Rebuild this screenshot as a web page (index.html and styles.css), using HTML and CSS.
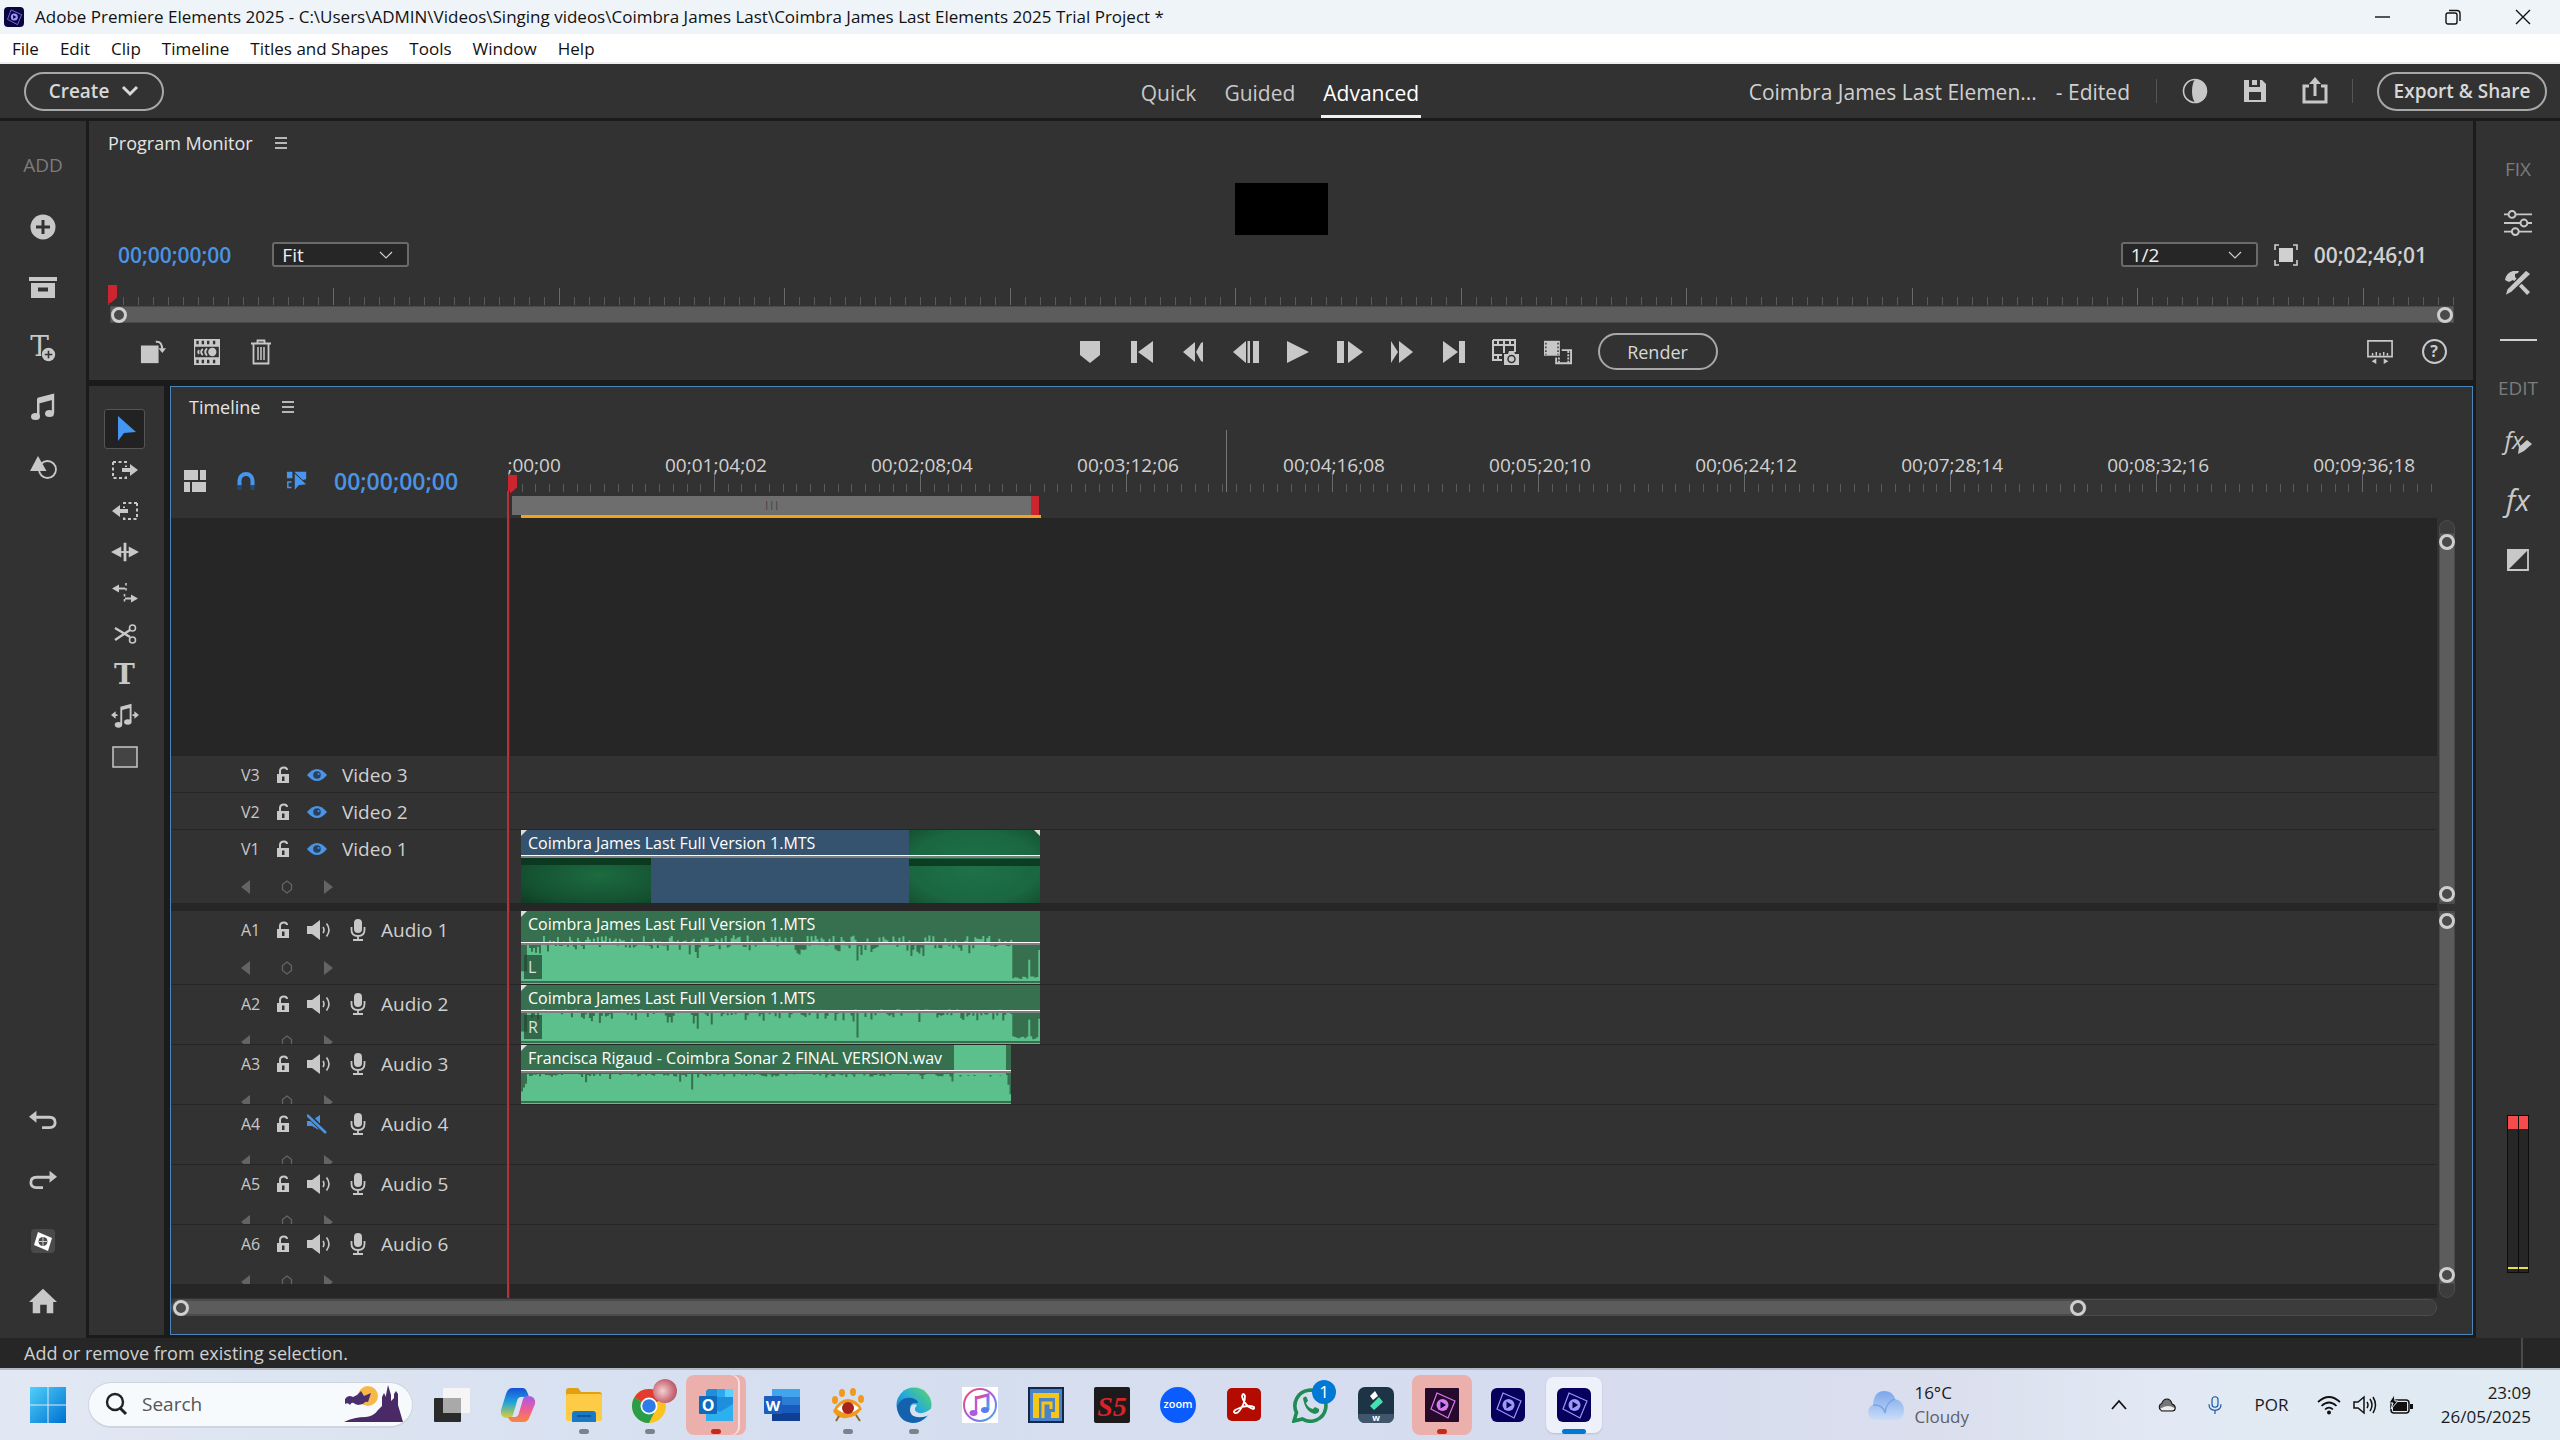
FILE: index.html
```html
<!DOCTYPE html>
<html lang="en">
<head>
    <meta charset="UTF-8">
    <meta name="viewport" content="width=device-width, initial-scale=1.0">
    <title>Adobe Premiere Elements 2025</title>
    <link rel="stylesheet" href="styles.css">
</head>
<body>
    <svg class="sprite" aria-hidden="true">
        <defs>
            <linearGradient id="g-win" x1="0" y1="0" x2="1" y2="1"><stop offset="0" stop-color="#4fd0fb"/><stop offset="1" stop-color="#0070d0"/></linearGradient>
            <linearGradient id="g-edge" x1="0" y1="1" x2="1" y2="0"><stop offset="0" stop-color="#1173c8"/><stop offset="0.5" stop-color="#23a9dd"/><stop offset="1" stop-color="#5fdb5a"/></linearGradient>
            <linearGradient id="g-cop1" x1="0" y1="0" x2="0" y2="1"><stop offset="0" stop-color="#1650d8"/><stop offset="0.5" stop-color="#22a6d8"/><stop offset="1" stop-color="#e0cf30"/></linearGradient>
            <linearGradient id="g-cop2" x1="0" y1="0" x2="0" y2="1"><stop offset="0" stop-color="#a25be8"/><stop offset="0.5" stop-color="#ee5a9a"/><stop offset="1" stop-color="#f8893a"/></linearGradient>
            <linearGradient id="g-music" x1="0" y1="0" x2="1" y2="1"><stop offset="0" stop-color="#fb4a60"/><stop offset="0.5" stop-color="#a75ce0"/><stop offset="1" stop-color="#33b5f2"/></linearGradient>
            <linearGradient id="g-cloud" x1="0" y1="0" x2="0" y2="1"><stop offset="0" stop-color="#7ba6ea"/><stop offset="1" stop-color="#c9ddfa"/></linearGradient>
        </defs>
        <symbol id="i-menu" viewBox="0 0 12 12"><path d="M0 1h12M0 6h12M0 11h12" stroke="currentColor" stroke-width="1.6"/></symbol>
        <symbol id="i-chev" viewBox="0 0 18 12"><path d="M2 2l7 7 7-7" fill="none" stroke="currentColor" stroke-width="3"/></symbol>
        <symbol id="i-thin" viewBox="0 0 14 8"><path d="M1 1l6 6 6-6" fill="none" stroke="currentColor" stroke-width="1.2"/></symbol>
        <symbol id="i-plus" viewBox="0 0 28 28"><circle cx="14" cy="14" r="12.500" fill="currentColor"/><path d="M14 7v14M7 14h14" stroke="#323232" stroke-width="3"/></symbol>
        <symbol id="i-box" viewBox="0 0 28 28"><path d="M0 4h28v4H0zM2 10h24v15H2z" fill="currentColor"/><path d="M9 14.500h10v4H9z" fill="#323232"/></symbol>
        <symbol id="i-music" viewBox="0 0 28 28"><path d="M9 6l15-4v18" fill="none" stroke="currentColor" stroke-width="2.400"/><path d="M8 5.500L25 1v5.500L8 11zM8 8h2.500v16H8z" fill="currentColor"/><ellipse cx="6.500" cy="23.500" rx="4.500" ry="3.500" fill="currentColor"/><ellipse cx="20.500" cy="20.500" rx="4.500" ry="3.500" fill="currentColor"/></symbol>
        <symbol id="i-shapes" viewBox="0 0 28 28"><circle cx="18.500" cy="16.500" r="8.500" fill="none" stroke="currentColor" stroke-width="1.800"/><path d="M9 3l8.500 15H1z" fill="currentColor"/></symbol>
        <symbol id="i-undo" viewBox="0 0 30 24"><path d="M6 8h16q6 0 6 5.500T22 19h-8" fill="none" stroke="currentColor" stroke-width="3"/><path d="M8 1v13L0 7.500z" fill="currentColor"/></symbol>
        <symbol id="i-redo" viewBox="0 0 30 24"><path d="M24 8H8q-6 0-6 5.500T8 19h7" fill="none" stroke="currentColor" stroke-width="3"/><path d="M22 1v13l8-6.500z" fill="currentColor"/></symbol>
        <symbol id="i-org" viewBox="0 0 26 26"><rect x="1" y="1" width="24" height="24" rx="4" fill="#4a4a4a"/><path d="M8 4l14 6-4 13-14-6z" fill="#fff"/><circle cx="13" cy="13.500" r="4.500" fill="#4a4a4a"/><path d="M13 9v9M8.500 13.500h9" stroke="#ccc" stroke-width="1"/></symbol>
        <symbol id="i-home" viewBox="0 0 30 26"><path d="M15 0l15 14h-4v12h-7v-9h-7v9H4V14H0z" fill="currentColor"/></symbol>
        <symbol id="i-contrast" viewBox="0 0 28 28"><circle cx="14" cy="14" r="11.500" fill="none" stroke="currentColor" stroke-width="1.600"/><path d="M14 2.500a11.500 11.500 0 0 1 0 23q-3-4-3-11.500t3-11.500z" fill="currentColor"/></symbol>
        <symbol id="i-save" viewBox="0 0 24 24"><path d="M1 1h5v7h11V1h2l4 4v18H1z" fill="currentColor"/><path d="M9 1h5v5H9z" fill="currentColor"/><path d="M6 13h12v8H6z" fill="#323232"/></symbol>
        <symbol id="i-share" viewBox="0 0 28 28"><path d="M8 9H3v16h22V9h-5" fill="none" stroke="currentColor" stroke-width="3"/><path d="M14 19V5" stroke="currentColor" stroke-width="3"/><path d="M14 0l6 7H8z" fill="currentColor"/></symbol>
        <symbol id="i-fit" viewBox="0 0 24 22"><path d="M5 1H1v5M19 1h4v5M5 21H1v-5M19 21h4v-5" fill="none" stroke="currentColor" stroke-width="1.600"/><path d="M5 4h14v14H5z" fill="currentColor"/></symbol>
        <symbol id="i-rotate" viewBox="0 0 28 28"><path d="M1 7h19v19H1z" fill="currentColor"/><path d="M17 3q7-1 7 9" fill="none" stroke="currentColor" stroke-width="2"/><path d="M20 10h8l-4 5z" fill="currentColor"/></symbol>
        <symbol id="i-film" viewBox="0 0 22 22"><path d="M0 0h22v22H0z" fill="currentColor"/><path d="M1 6.500h20v9H1zM2 1.500h2v3H2zM6.500 1.500h2v3h-2zM11 1.500h2v3h-2zM16 1.500h2v3h-2zM2 17.500h2v3H2zM6.500 17.500h2v3h-2zM11 17.500h2v3h-2zM16 17.500h2v3h-2z" fill="#323232"/><circle cx="15.500" cy="11" r="3.500" fill="currentColor"/><path d="M11 8q-3 3 0 6M7.500 8.500q-3 2.500 0 5M4.500 9.500q-2 1.500 0 3" fill="none" stroke="currentColor" stroke-width="1.600"/></symbol>
        <symbol id="i-trash" viewBox="0 0 20 26"><path d="M0 4.500h20M6.500 4V1.500h7V4M2.500 5v19.500h15V5" fill="none" stroke="currentColor" stroke-width="1.800"/><path d="M7 8v13M10 8v13M13 8v13" stroke="currentColor" stroke-width="1.500"/></symbol>
        <symbol id="i-marker" viewBox="0 0 22 22"><path d="M1 0h20v14l-10 8L1 14z" fill="currentColor"/></symbol>
        <symbol id="i-first" viewBox="0 0 22 22"><path d="M0 0h6v22H0zM22 0v22L7 11z" fill="currentColor"/></symbol>
        <symbol id="i-rew" viewBox="0 0 22 22"><path d="M12 1v20L0 11zM20 1v20l-2-1-5-9 5-9z" fill="currentColor"/></symbol>
        <symbol id="i-back" viewBox="0 0 26 22"><path d="M13 0v22L0 11zM14.500 0h2.500v22h-2.500zM20 0h6v22h-6z" fill="currentColor"/></symbol>
        <symbol id="i-play" viewBox="0 0 22 22"><path d="M0 0l22 11L0 22z" fill="currentColor"/></symbol>
        <symbol id="i-fwdstep" viewBox="0 0 26 22"><path d="M0 0h7v22H0zM11 0l15 11-15 11z" fill="currentColor"/></symbol>
        <symbol id="i-ff" viewBox="0 0 22 22"><path d="M0 0l7 11-7 11zM8 0l14 11L8 22z" fill="currentColor"/></symbol>
        <symbol id="i-last" viewBox="0 0 22 22"><path d="M0 0l15 11L0 22zM16 0h6v22h-6z" fill="currentColor"/></symbol>
        <symbol id="i-grab" viewBox="0 0 28 28"><path d="M1 2h22v12M1 2v20h9M1 7h22M1 17h9M12 7v8M6 2v5M12 2v5M18 2v5M6 17v5" fill="none" stroke="currentColor" stroke-width="2"/><path d="M12 16h4l1-3h5l1 3h4v11H12z" fill="currentColor"/><circle cx="19.500" cy="21" r="3.500" fill="none" stroke="#323232" stroke-width="1.500"/></symbol>
        <symbol id="i-clips" viewBox="0 0 30 26"><path d="M0 1h17v16H0z" fill="currentColor"/><path d="M2 3v13M15 3v13" stroke="#323232" stroke-width="1.500" stroke-dasharray="2 2"/><path d="M19 11h10v14H13v-6" fill="none" stroke="currentColor" stroke-width="2"/><path d="M16 19v6M26 12v13" stroke="currentColor" stroke-width="2" stroke-dasharray="2 1.500"/></symbol>
        <symbol id="i-ruler" viewBox="0 0 28 26"><path d="M1 1h26v17H1z" fill="none" stroke="currentColor" stroke-width="1.800"/><path d="M6 17v-3M10 17v-4M14 17v-3M18 17v-4M22 17v-3" stroke="currentColor" stroke-width="1.600"/><path d="M10 20v6l-5-3zM18 20v6l5-3z" fill="currentColor"/></symbol>
        <symbol id="i-arrow" viewBox="0 0 28 28"><path d="M7 1v25l6-8 12-1z" fill="currentColor"/></symbol>
        <symbol id="i-selfwd" viewBox="0 0 28 28"><path d="M2 6h13v5M2 6v16h13v-4" fill="none" stroke="currentColor" stroke-width="2" stroke-dasharray="3 2.500"/><path d="M11 12h8V8l8 6-8 6v-4h-8z" fill="currentColor"/></symbol>
        <symbol id="i-selback" viewBox="0 0 28 28"><path d="M26 6H13v5M26 6v16H13v-4" fill="none" stroke="currentColor" stroke-width="2" stroke-dasharray="3 2.500"/><path d="M17 12H9V8l-8 6 8 6v-4h8z" fill="currentColor"/></symbol>
        <symbol id="i-stretch" viewBox="0 0 30 28"><path d="M13.500 4h3v20h-3zM11 8v12L0 14zM19 8v12l11-6z" fill="currentColor"/><path d="M8 14h14" stroke="currentColor" stroke-width="2"/></symbol>
        <symbol id="i-slip" viewBox="0 0 28 28"><path d="M6 9.500h8M14 19.500h8" fill="none" stroke="currentColor" stroke-width="2"/><path d="M15 4v9M13.500 15v9" stroke="currentColor" stroke-width="1.600" stroke-dasharray="2.500 2.500"/><path d="M8 5.500v8L1 9.500zM20 15.500v8l7-4z" fill="currentColor"/></symbol>
        <symbol id="i-cut" viewBox="0 0 28 28"><path d="M4 8l15 9M4 20l15-10" stroke="currentColor" stroke-width="2.400"/><circle cx="21.500" cy="8" r="3" fill="none" stroke="currentColor" stroke-width="1.600"/><circle cx="21.500" cy="20" r="3" fill="none" stroke="currentColor" stroke-width="1.600"/></symbol>
        <symbol id="i-remix" viewBox="0 0 30 28"><path d="M10 4l12-3v4L10 8zM10 5h2v18h-2zM20 3h2v17h-2z" fill="currentColor"/><ellipse cx="8" cy="23.500" rx="4" ry="3" fill="currentColor"/><ellipse cx="18" cy="20.500" rx="4" ry="3" fill="currentColor"/><path d="M5 9v8l-5-4zM25 9v8l5-4z" fill="currentColor"/><path d="M3 13h4M23 13h4" stroke="currentColor" stroke-width="2"/></symbol>
        <symbol id="i-rect" viewBox="0 0 28 28"><rect x="2" y="4" width="24" height="20" fill="#444" stroke="currentColor" stroke-width="1.500"/></symbol>
        <symbol id="i-tracks" viewBox="0 0 22 22"><path d="M0 0h14v10H0zM16 0h6v10h-6zM0 12h6v10H0zM8 12h14v10H8z" fill="currentColor"/></symbol>
        <symbol id="i-snap" viewBox="0 0 18 20"><path d="M2.500 15V9.500a6.500 6.500 0 0 1 13 0V15" fill="none" stroke="#4496f0" stroke-width="4"/><path d="M.5 14h4v5h-4zM13.500 14h4v5h-4z" fill="#27496f"/></symbol>
        <symbol id="i-linksel" viewBox="0 0 24 22"><path d="M1 1h6v7H1zM9 1h13v8l-4 1z" fill="#4496f0"/><path d="M6 12H2v6h4" fill="none" stroke="#4496f0" stroke-width="1.600"/><path d="M9 2v20l5-6 9-1z" fill="#4496f0" stroke="#323232" stroke-width="1"/></symbol>
        <symbol id="i-lock" viewBox="0 0 14 18"><path d="M1 8h12v9H1z" fill="currentColor"/><path d="M4 8V5q0-3.500 4-3.500 3 0 3 2.500" fill="none" stroke="currentColor" stroke-width="2"/><path d="M6 10.500h2.500V15H6z" fill="#323232"/></symbol>
        <symbol id="i-eye" viewBox="0 0 20 12"><path d="M0 6q10-12 20 0-10 12-20 0z" fill="#4a94e6"/><circle cx="10" cy="6" r="3.800" fill="#28405c"/><circle cx="11.500" cy="5" r="1" fill="#4a94e6"/></symbol>
        <symbol id="i-spk" viewBox="0 0 24 20"><path d="M0 6h5l8-6v20l-8-6H0z" fill="currentColor"/><path d="M16 7q2 3 0 6M19.500 3.500q5 6.500 0 13" fill="none" stroke="currentColor" stroke-width="1.600"/></symbol>
        <symbol id="i-mute" viewBox="0 0 24 20"><path d="M0 7h4l9-6v15l-3-1-5-3H0z" fill="#4a94e6"/><path d="M0 0l19 19" stroke="#323232" stroke-width="5"/><path d="M0 1l19 18" stroke="#4a94e6" stroke-width="2.600"/></symbol>
        <symbol id="i-mic" viewBox="0 0 16 22"><rect x="4" y="0" width="8" height="14" rx="4" fill="currentColor"/><path d="M1.500 8v3q0 6 6.500 6t6.500-6V8M8 17v4M3 21h10" fill="none" stroke="currentColor" stroke-width="1.800"/></symbol>
        <symbol id="i-kprev" viewBox="0 0 10 14"><path d="M9 0v14L0 7z" fill="#646464"/></symbol>
        <symbol id="i-knext" viewBox="0 0 10 14"><path d="M1 0v14l9-7z" fill="#646464"/></symbol>
        <symbol id="i-kadd" viewBox="0 0 12 14"><path d="M6 1l4.500 3.500v5L6 13 1.500 9.500v-5z" fill="none" stroke="#646464" stroke-width="1.300"/></symbol>
        <symbol id="i-adjust" viewBox="0 0 26 24"><path d="M0 4h26M0 12h26M0 20h26" stroke="currentColor" stroke-width="1.800"/><g fill="#323232" stroke="currentColor" stroke-width="1.800"><circle cx="7.500" cy="4" r="3.200"/><circle cx="18.500" cy="12" r="3.200"/><circle cx="10.500" cy="20" r="3.200"/></g></symbol>
        <symbol id="i-tools" viewBox="0 0 28 26"><path d="M1 10q1-7 8-9h6l-1 2-3 1v3l15 15-3 3L9 10 5 12z" fill="currentColor"/><path d="M22 0l5 4L8 22l-7 4 2-7z" fill="currentColor" stroke="#323232" stroke-width="1.200"/></symbol>
        <symbol id="i-pen" viewBox="0 0 14 14"><path d="M9 0l5 4-8 7-6 3 1-7z" fill="currentColor"/></symbol>
        <symbol id="i-trans" viewBox="0 0 22 22"><path d="M1 1h20v20H1z" fill="none" stroke="currentColor" stroke-width="1.800"/><path d="M0 0h22L0 22z" fill="currentColor"/></symbol>
        <symbol id="i-pre" viewBox="0 0 34 34"><path d="M12 5l18 8-7 17L6 21z" fill="none" stroke="currentColor" stroke-width="1.200"/><circle cx="17.500" cy="17" r="6" fill="currentColor"/><path d="M15.500 13.500v7l5.500-3.500z" fill="#0a0540"/></symbol>
    </svg>

    <header class="titlebar">
        <span class="app-icon"><svg><use href="#i-pre"/></svg></span>
        <span class="title">Adobe Premiere Elements 2025 - C:\Users\ADMIN\Videos\Singing videos\Coimbra James Last\Coimbra James Last Elements 2025 Trial Project *</span>
        <div class="win-buttons">
            <button aria-label="Minimize"><svg viewBox="0 0 16 16"><path d="M0 8h15" stroke="#111" stroke-width="1.400"/></svg></button>
            <button aria-label="Restore"><svg viewBox="0 0 16 16"><rect x="1" y="4" width="11" height="11" rx="2" fill="none" stroke="#111" stroke-width="1.400"/><path d="M4 1.500h8q3 0 3 3V12" fill="none" stroke="#111" stroke-width="1.400"/></svg></button>
            <button aria-label="Close"><svg viewBox="0 0 16 16"><path d="M1 1l14 14M15 1L1 15" stroke="#111" stroke-width="1.400"/></svg></button>
        </div>
    </header>
    <nav class="menubar">
        <a href="#">File</a><a href="#">Edit</a><a href="#">Clip</a><a href="#">Timeline</a><a href="#">Titles and Shapes</a><a href="#">Tools</a><a href="#">Window</a><a href="#">Help</a>
    </nav>

    <div class="topbar">
        <div class="top-left"><button class="pill create">Create <svg><use href="#i-chev"/></svg></button></div>
        <nav class="modes"><a href="#">Quick</a><a href="#">Guided</a><a href="#" class="active">Advanced</a></nav>
        <div class="top-right">
            <span class="project">Coimbra James Last Elemen...</span>
            <span class="edited">- Edited</span>
            <i class="sep"></i>
            <button class="icon" aria-label="Appearance"><svg><use href="#i-contrast"/></svg></button>
            <button class="icon small" aria-label="Save"><svg><use href="#i-save"/></svg></button>
            <button class="icon" aria-label="Share"><svg><use href="#i-share"/></svg></button>
            <i class="sep"></i>
            <button class="pill export">Export &amp; Share</button>
        </div>
    </div>

    <main class="workspace">
        <aside class="sidebar left">
            <span class="side-label">ADD</span>
            <button aria-label="Add media"><svg><use href="#i-plus"/></svg></button>
            <button aria-label="Project assets"><svg><use href="#i-box"/></svg></button>
            <button aria-label="Titles"><span class="t-glyph">T</span><svg class="t-plus"><use href="#i-plus"/></svg></button>
            <button aria-label="Music"><svg><use href="#i-music"/></svg></button>
            <button aria-label="Graphics"><svg><use href="#i-shapes"/></svg></button>
            <div class="spacer"></div>
            <button aria-label="Undo"><svg><use href="#i-undo"/></svg></button>
            <button aria-label="Redo"><svg><use href="#i-redo"/></svg></button>
            <button aria-label="Organizer"><svg><use href="#i-org"/></svg></button>
            <button aria-label="Home"><svg><use href="#i-home"/></svg></button>
        </aside>

        <div class="center">
            <section class="monitor">
                <h2>Program Monitor <svg><use href="#i-menu"/></svg></h2>
                <div class="preview"></div>
                <div class="monitor-info">
                    <span class="timecode blue">00;00;00;00</span>
                    <label class="select fit"><select aria-label="Zoom level"><option>Fit</option></select><svg><use href="#i-thin"/></svg></label>
                    <div class="spacer"></div>
                    <label class="select"><select aria-label="Playback resolution"><option>1/2</option></select><svg><use href="#i-thin"/></svg></label>
                    <svg class="fit-icon"><use href="#i-fit"/></svg>
                    <span class="timecode total">00;02;46;01</span>
                </div>
                <div class="ticks monitor-ticks" data-count="157" data-major="15"><i class="playhead-flag"></i></div>
                <div class="scrub"><i class="knob"></i><i class="knob"></i></div>
                <div class="transport">
                    <div class="transport-side">
                        <button aria-label="Rotate"><svg><use href="#i-rotate"/></svg></button>
                        <button aria-label="Smart trim"><svg class="w22"><use href="#i-film"/></svg></button>
                        <button aria-label="Delete"><svg class="w20"><use href="#i-trash"/></svg></button>
                    </div>
                    <div class="transport-main">
                        <button aria-label="Add marker"><svg class="w22"><use href="#i-marker"/></svg></button>
                        <button aria-label="Go to previous"><svg class="w22"><use href="#i-first"/></svg></button>
                        <button aria-label="Rewind"><svg class="w22"><use href="#i-rew"/></svg></button>
                        <button aria-label="Step back"><svg class="w26"><use href="#i-back"/></svg></button>
                        <button aria-label="Play"><svg class="w22"><use href="#i-play"/></svg></button>
                        <button aria-label="Step forward"><svg class="w26"><use href="#i-fwdstep"/></svg></button>
                        <button aria-label="Fast forward"><svg class="w22"><use href="#i-ff"/></svg></button>
                        <button aria-label="Go to next"><svg class="w22"><use href="#i-last"/></svg></button>
                        <button aria-label="Freeze frame"><svg><use href="#i-grab"/></svg></button>
                        <button aria-label="Split clip"><svg><use href="#i-clips"/></svg></button>
                        <button class="pill render">Render</button>
                    </div>
                    <div class="transport-side end">
                        <button aria-label="Show ruler"><svg><use href="#i-ruler"/></svg></button>
                        <button aria-label="Help"><span class="help">?</span></button>
                    </div>
                </div>
            </section>

            <div class="lower">
                <div class="tools">
                    <button class="active" aria-label="Selection"><svg><use href="#i-arrow"/></svg></button>
                    <button aria-label="Track select forward"><svg><use href="#i-selfwd"/></svg></button>
                    <button aria-label="Track select backward"><svg><use href="#i-selback"/></svg></button>
                    <button aria-label="Time stretch"><svg><use href="#i-stretch"/></svg></button>
                    <button aria-label="Slip"><svg><use href="#i-slip"/></svg></button>
                    <button aria-label="Split"><svg><use href="#i-cut"/></svg></button>
                    <button aria-label="Text"><span class="t-glyph">T</span></button>
                    <button aria-label="Music remix"><svg><use href="#i-remix"/></svg></button>
                    <button aria-label="Rectangle"><svg><use href="#i-rect"/></svg></button>
                </div>

                <section class="timeline">
                    <h2>Timeline <svg><use href="#i-menu"/></svg></h2>
                    <div class="ruler-row">
                        <div class="ruler-tools">
                            <button aria-label="Track layout"><svg class="w22"><use href="#i-tracks"/></svg></button>
                            <button aria-label="Snap"><svg class="w18"><use href="#i-snap"/></svg></button>
                            <button aria-label="Linked selection"><svg class="w22"><use href="#i-linksel"/></svg></button>
                            <span class="timecode big blue">00;00;00;00</span>
                        </div>
                        <div class="ruler">
                            <div class="ruler-labels">
                                <span>00;00;00;00</span><span>00;01;04;02</span><span>00;02;08;04</span><span>00;03;12;06</span><span>00;04;16;08</span><span>00;05;20;10</span><span>00;06;24;12</span><span>00;07;28;14</span><span>00;08;32;16</span><span>00;09;36;18</span>
                            </div>
                            <div class="ticks" data-count="141" data-major="15"></div>
                            <div class="workarea"><span>|||</span></div>
                            <i class="render-line"></i>
                            <i class="cursor-line"></i>
                            <i class="playhead-flag"></i>
                        </div>
                    </div>
                    <div class="tracks-row">
                        <div class="tracks">
                            <div class="track-space"></div>
                            <div class="video-tracks" id="video"></div>
                            <div class="audio-tracks" id="audio"></div>
                            <i class="playhead-line"></i>
                        </div>
                        <div class="vscrolls">
                            <div class="vscroll top"><div class="thumb"><i class="knob"></i><i class="knob"></i></div></div>
                            <div class="vscroll bottom"><div class="thumb"><i class="knob"></i><i class="knob"></i></div></div>
                        </div>
                    </div>
                    <div class="hscroll"><div class="thumb"><i class="knob"></i><i class="knob"></i></div></div>
                </section>
            </div>
        </div>

        <aside class="sidebar right">
            <span class="side-label">FIX</span>
            <button aria-label="Adjust"><svg><use href="#i-adjust"/></svg></button>
            <button aria-label="Tools"><svg><use href="#i-tools"/></svg></button>
            <hr>
            <span class="side-label edit">EDIT</span>
            <button aria-label="Applied effects"><span class="fx small">fx</span><svg class="pen"><use href="#i-pen"/></svg></button>
            <button aria-label="Effects"><span class="fx">fx</span></button>
            <button aria-label="Transitions"><svg class="w22"><use href="#i-trans"/></svg></button>
            <div class="spacer"></div>
            <div class="meter"><i></i><i></i></div>
        </aside>
    </main>

    <div class="statusbar"><span>Add or remove from existing selection.</span><i></i></div>

    <footer class="taskbar">
        <button class="task" aria-label="Start"><svg viewBox="0 0 35 35"><path d="M0 0h17v17H0zM18 0h17v17H18zM0 18h17v17H0zM18 18h17v17H18z" fill="url(#g-win)"/></svg></button>
        <label class="search">
            <svg class="search-icon" viewBox="0 0 24 24"><circle cx="11" cy="10" r="8" fill="none" stroke="#222" stroke-width="2.400"/><path d="M16 16l6 6" stroke="#222" stroke-width="3"/></svg>
            <input type="text" placeholder="Search" aria-label="Search">
            <svg class="castle" viewBox="0 0 60 38"><circle cx="24" cy="11" r="10" fill="#f7b84a"/><path d="M1 14q3-5 8-2l4-2 4-4 3 5 7-3-3 9q-3-1-5 2l-5 1-3-1q-3-3-5 1-2-3-5-1z" fill="#4a2f6e"/><path d="M0 37q10-5 22-5 8-1 12-7l4-4V12l2-4 2 4v-2l2-10 3 10v6l3-3V9l2-3 2 3v11l5 17z" fill="#4a2a66"/></svg>
        </label>
        <button class="task" aria-label="Task view"><svg viewBox="0 0 36 36"><rect x="0" y="11" width="27" height="24" rx="1" fill="#2b2b2b"/><rect x="9" y="1" width="27" height="25" rx="1" fill="#f5f5f5"/><path d="M9 11h18v15H9z" fill="#a9a9a9"/></svg></button>
        <button class="task" aria-label="Copilot"><svg viewBox="0 0 36 36"><path d="M12 1h11q3 0 5 6l1 3h-8q-3 0-4 4l-4 14q-1 3-5 3Q0 31 1 23L6 7q2-6 6-6z" fill="url(#g-cop1)"/><path d="M24 35H13q-3 0-5-5h7q3 0 4-4l4-14q1-3 5-3 8 0 7 8l-5 12q-2 6-6 6z" fill="url(#g-cop2)"/></svg></button>
        <button class="task run" aria-label="File Explorer"><svg viewBox="0 0 36 36"><path d="M0 4q0-3 3-3h9l3 4h18q3 0 3 3v8H0z" fill="#e2a00f"/><rect x="0" y="7" width="36" height="27" rx="2" fill="#fdcb45"/><path d="M6 35V27q0-3 3-3h18q3 0 3 3v8z" fill="#1a78c8"/><path d="M11 29h14" stroke="#0c4c8a" stroke-width="1.500"/></svg></button>
        <button class="task run" aria-label="Chrome"><svg viewBox="0 0 36 36"><circle cx="17" cy="19" r="17" fill="#fcc31e"/><path d="M17 19L2.300 10.500A17 17 0 0 1 32 11z" fill="#e33b2e"/><path d="M17 19L2.300 10.500A17 17 0 0 0 17 36l6-12z" fill="#2a9d49"/><circle cx="17" cy="19" r="8.500" fill="#fff"/><circle cx="17" cy="19" r="6.800" fill="#2f7be8"/></svg><i class="avatar"></i></button>
        <button class="task run alert stacked" aria-label="Outlook"><svg viewBox="0 0 36 36"><path d="M10 2h25v32H8V4z" fill="#1e8fdc"/><path d="M19 2h8v8h-8z" fill="#2aa9ee"/><path d="M27 2h8v8h-8z" fill="#55d0ff"/><path d="M8 17l14 8 13-8v17H8z" fill="#2fb0ee"/><rect x="1" y="9" width="18" height="18" rx="1" fill="#0f69bd"/><text x="10" y="24" text-anchor="middle" font-size="16" font-weight="700" fill="#fff">O</text></svg></button>
        <button class="task" aria-label="Word"><svg viewBox="0 0 36 36"><path d="M8 2h28v8H8z" fill="#41a5ee"/><path d="M8 10h28v8H8z" fill="#2b7cd3"/><path d="M8 18h28v8H8z" fill="#185abd"/><path d="M8 26h28v8H8z" fill="#103f91"/><rect x="0" y="9" width="18" height="18" rx="1" fill="#1a5dbe"/><text x="9" y="24" text-anchor="middle" font-size="15" font-weight="700" fill="#fff">W</text></svg></button>
        <button class="task run" aria-label="XnView"><svg viewBox="0 0 36 36"><g fill="#f09a1c"><ellipse cx="5" cy="13" rx="3" ry="4"/><ellipse cx="12" cy="6" rx="3" ry="4"/><ellipse cx="23" cy="5" rx="3" ry="4"/><ellipse cx="31" cy="12" rx="3" ry="4"/><path d="M3 24q6-12 15-12t14 10l-6 6q-7 4-13 3-7-1-10-7z"/></g><path d="M7 22q10-12 22-1-11 10-22 1z" fill="#fff"/><circle cx="18" cy="21" r="6" fill="#a8231c"/><path d="M9 29l-3 5M26 28l4 6" stroke="#8a6a30" stroke-width="2"/></svg></button>
        <button class="task run" aria-label="Edge"><svg viewBox="0 0 36 36"><circle cx="18" cy="18" r="17.500" fill="url(#g-edge)"/><path d="M1 19q5-10 15-8 6 2 6 5-9-2-8 7 3 9 17 6-6 7-14 7Q2 35 1 19z" fill="#1461ad"/><path d="M21 18q-5 6 2 8 6 1 13-5-1 6-5 8-15 4-17-5 0-9 7-6z" fill="#d8e0f0"/></svg></button>
        <button class="task" aria-label="iTunes"><svg viewBox="0 0 36 36"><path d="M0 0h36v36H0z" fill="#fff"/><circle cx="18" cy="18" r="16" fill="none" stroke="url(#g-music)" stroke-width="2"/><path d="M14 11l12-3v15" fill="none" stroke="url(#g-music)" stroke-width="3"/><path d="M14 9v17" stroke="#c458c8" stroke-width="2.400"/><ellipse cx="11.500" cy="26" rx="4" ry="3" fill="#b05ae0"/><ellipse cx="23" cy="23" rx="4" ry="3" fill="#5a7cf0"/></svg></button>
        <button class="task" aria-label="Player"><svg viewBox="0 0 36 36"><path d="M1 1h34v34H1z" fill="#4b83c8" stroke="#14264a" stroke-width="2"/><path d="M5 31V6h26v25h-8v-6h4V11H11v20z" fill="#f5c518"/><path d="M15 31V16h8v6" fill="none" stroke="#f5c518" stroke-width="3"/></svg></button>
        <button class="task" aria-label="S5"><svg viewBox="0 0 36 36"><rect width="36" height="36" rx="2" fill="#1c1a1a"/><text x="18" y="29" text-anchor="middle" font-size="28" font-style="italic" font-weight="700" font-family="Liberation Serif, serif" fill="#d8232a">S5</text></svg></button>
        <button class="task" aria-label="Zoom"><svg viewBox="0 0 36 36"><circle cx="18" cy="18" r="18" fill="#0b5cff"/><text x="18" y="21" text-anchor="middle" font-size="11" font-weight="600" fill="#fff">zoom</text></svg></button>
        <button class="task" aria-label="Acrobat"><svg viewBox="0 0 36 36"><rect x="1" y="1" width="34" height="33" rx="5" fill="#b30b00"/><path d="M9 26q-4-2 7-6 8-2 12 0 1 4-5 0-6-5-7-11 1-4 3 0 0 7-5 14-3 4-5 3z" fill="none" stroke="#fff" stroke-width="1.800"/></svg></button>
        <button class="task" aria-label="WhatsApp"><svg viewBox="0 0 36 36"><path d="M2 34l2.500-8.500A15.500 15.500 0 1 1 10.500 32z" fill="none" stroke="#1f8b55" stroke-width="3.600"/><path d="M11 11q3-3 4 0l1 3-2 2q2 5 7 6l2-2 4 2q1 4-4 5Q13 25 11 11z" fill="#1f8b55"/></svg><b class="badge">1</b></button>
        <button class="task" aria-label="Filmora"><svg viewBox="0 0 36 36"><rect width="36" height="36" rx="7" fill="#1d3346"/><path d="M0 27h36q0 9-7 9H7q-7 0-7-9z" fill="#40566a"/><path d="M12 9l5-5 3 5-5 4z" fill="#fff"/><path d="M12 19l9-9 4 5-9 8z" fill="#45e0b0"/><text x="18" y="34" text-anchor="middle" font-size="9" font-weight="700" fill="#fff">w</text></svg></button>
        <button class="task run alert" aria-label="Premiere Elements Editor"><svg class="pre pink"><use href="#i-pre"/></svg></button>
        <button class="task" aria-label="Elements Organizer"><svg class="pre"><use href="#i-pre"/></svg></button>
        <button class="task current" aria-label="Premiere Elements"><svg class="pre"><use href="#i-pre"/></svg></button>

        <div class="weather">
            <svg viewBox="0 0 38 38"><path d="M8 34a8 8 0 0 1-1-15Q8 5 18 5q9 0 11 8 9 2 9 12 0 9-9 9z" fill="url(#g-cloud)"/><path d="M7 19q10-1 12 8 1-11 10-14" fill="none" stroke="#7ba4e8" stroke-width="1.500"/></svg>
            <div><span>16°C</span><span class="muted">Cloudy</span></div>
        </div>
        <div class="tray">
            <button class="tray-slot" aria-label="Hidden icons"><svg viewBox="0 0 18 18"><path d="M2 13l7-8 7 8" fill="none" stroke="#111" stroke-width="1.800"/></svg></button>
            <button class="tray-slot" aria-label="OneDrive"><svg class="w24" viewBox="0 0 24 20"><path d="M4 17a5 5 0 0 1 1-9q2-6 7-6t7 7q4 1 4 5t-4 4H5z" fill="#777" stroke="#111" stroke-width="1.400"/><path d="M3 15q9-7 19-1 0 3-3 3H5z" fill="#eee"/></svg></button>
            <button class="tray-slot" aria-label="Microphone"><svg class="w24" viewBox="0 0 24 24"><rect x="8" y="1" width="8" height="14" rx="4" fill="none" stroke="#1557a8" stroke-width="1.600"/><path d="M4 11q0 8 8 8t8-8M12 19v5" fill="none" stroke="#1557a8" stroke-width="1.600"/></svg></button>
            <span class="lang">POR</span>
            <button class="tray-icon" aria-label="Wi-Fi"><svg class="w24" viewBox="0 0 24 20"><path d="M1 7q11-10 22 0M4.500 11q7.500-7 15 0M8 14.500q4-4 8 0" fill="none" stroke="#111" stroke-width="1.700"/><circle cx="12" cy="17.500" r="2" fill="#111"/></svg></button>
            <button class="tray-icon" aria-label="Volume"><svg class="w24" viewBox="0 0 24 20"><path d="M1 7h4l6-5v16l-6-5H1z" fill="none" stroke="#111" stroke-width="1.500"/><path d="M14 7q2 3 0 6M17 4q4 6 0 12M20 2q5 8 0 16" fill="none" stroke="#111" stroke-width="1.500"/></svg></button>
            <button class="tray-icon" aria-label="Battery"><svg class="w24" viewBox="0 0 24 20"><rect x="2" y="5" width="18" height="13" rx="3" fill="none" stroke="#111" stroke-width="1.500"/><path d="M4 7h14v9H4zM21 9h3v5h-3z" fill="#111"/><path d="M5 0L0 8h4l-2 6 7-8H6z" fill="#111" stroke="#e2e8f3" stroke-width="1"/></svg></button>
            <div class="clock"><span>23:09</span><span>26/05/2025</span></div>
        </div>
    </footer>

    <script>
        const tracks = [
            { id: 'V3', name: 'Video 3', type: 'video', size: 'slim' },
            { id: 'V2', name: 'Video 2', type: 'video', size: 'slim' },
            { id: 'V1', name: 'Video 1', type: 'video', size: 'tall', clip: { title: 'Coimbra James Last Full Version 1.MTS', kind: 'film' } },
            { id: 'A1', name: 'Audio 1', type: 'audio', size: 'tall', clip: { title: 'Coimbra James Last Full Version 1.MTS', kind: 'wave', ch: 'L', h: 74, line: 32, seed: 7 } },
            { id: 'A2', name: 'Audio 2', type: 'audio', size: 'mid', clip: { title: 'Coimbra James Last Full Version 1.MTS', kind: 'wave', ch: 'R', h: 60, line: 27, seed: 11 } },
            { id: 'A3', name: 'Audio 3', type: 'audio', size: 'mid', clip: { title: 'Francisca Rigaud - Coimbra Sonar 2 FINAL VERSION.wav', kind: 'wave flat', h: 60, line: 26, seed: 5 } },
            { id: 'A4', name: 'Audio 4', type: 'audio', size: 'mid', muted: true },
            { id: 'A5', name: 'Audio 5', type: 'audio', size: 'mid' },
            { id: 'A6', name: 'Audio 6', type: 'audio', size: 'mid' }
        ];

        function icon(name, cls) {
            return `<svg class="${cls}"><use href="#i-${name}"/></svg>`;
        }

        // small repeatable random generator so that the waveform is stable
        function random(seed) {
            return () => (seed = (seed * 16807) % 2147483647) / 2147483647;
        }

        function wavePath(clip) {
            const rnd = random(clip.seed * 7919);
            const flat = clip.kind.includes('flat');
            const end = flat ? 483 : 492;
            const width = flat ? 490 : 520;
            let d = `M0 ${clip.h - 2}`;
            for (let x = 0; x < width; x += 2) {
                let top = clip.line + (flat ? 4 : 1);
                const r = rnd();
                if (flat) {
                    if (r > 0.96) top += rnd() * 9;
                    else if (r > 0.6) top += rnd() * 3;
                    if (x > 168 && x < 172) top += 16;
                    if (x < 6) top = clip.h - 12 - x * 2;
                    if (x > end) top = clip.line + (x - end) * 5;
                } else {
                    if (r < 0.45) top -= clip.ch === 'L' ? 1 + rnd() * 7 : rnd() * 3;
                    else if (r > 0.6) top += 2 + rnd() * rnd() * 13;
                    if (x > 174 && x < 178) top += 12;
                    if (x > 334 && x < 338) top += 18;
                    if (x < 6) top = clip.h - 12;
                    if (x >= end) top = clip.h - 4 - rnd() * 3;
                    if (x === 508) top = clip.h - 24;
                    if (x >= 518) top = clip.line + 8;
                }
                d += `V${top.toFixed(1)}h2`;
            }
            return d + `V${clip.h - 2}z`;
        }

        function clipHtml(clip) {
            if (clip.kind === 'film') {
                return `<div class="clip film"><span class="clip-title">${clip.title}</span><i class="clip-line"></i>
                    <div class="frames"><i class="frame"></i></div><i class="frame last"></i></div>`;
            }
            const width = clip.kind.includes('flat') ? 490 : 520;
            return `<div class="clip ${clip.kind}">
                <svg class="wave-shape" viewBox="0 0 ${width} ${clip.h}" preserveAspectRatio="none"><path d="${wavePath(clip)}" fill="#5bc08b"/></svg>
                <span class="clip-title">${clip.title}</span><i class="clip-line"></i>${clip.ch ? `<b class="channel">${clip.ch}</b>` : '<i class="intro"></i>'}</div>`;
        }

        tracks.forEach(t => {
            const row = document.createElement('div');
            row.className = `track ${t.type} ${t.size}`;
            const sound = t.muted ? icon('mute', 'spk') : icon('spk', 'spk');
            row.innerHTML = `<div class="track-head">
                    <div class="track-main"><span class="track-id">${t.id}</span>
                        <button aria-label="Lock ${t.name}">${icon('lock', 'lock')}</button>
                        ${t.type === 'video' ? `<button aria-label="Show ${t.name}">${icon('eye', 'eye')}</button>`
                        : `<button aria-label="Mute ${t.name}">${sound}</button><button aria-label="Record ${t.name}">${icon('mic', 'mic')}</button>`}
                        <span class="track-name">${t.name}</span></div>
                    ${t.size === 'slim' ? '' : `<div class="keys">${icon('kprev', 'k')}${icon('kadd', 'k add')}${icon('knext', 'k')}</div>`}
                </div><div class="lane">${t.clip ? clipHtml(t.clip) : ''}</div>`;
            document.getElementById(t.type).appendChild(row);
        });

        document.querySelectorAll('.ticks').forEach(el => {
            for (let i = 0; i < Number(el.dataset.count); i++) {
                const tick = document.createElement('i');
                tick.className = i % Number(el.dataset.major) === 0 && i > 0 ? 'tick major' : 'tick';
                el.appendChild(tick);
            }
        });
    </script>
</body>
</html>
```
FILE: styles.css
```css
* {
    box-sizing: border-box;
}
body {
    margin: 0;
    min-height: 100vh;
    display: flex;
    flex-direction: column;
    background: #1b1b1b;
    color: #d0d0d0;
    font-family: "Open Sans", "Noto Sans", sans-serif;
    font-size: 18px;
    line-height: 24px;
}
button {
    display: flex;
    align-items: center;
    justify-content: center;
    padding: 0;
    border: none;
    background: none;
    color: #c8c8c8;
    font: inherit;
    cursor: pointer;
}
a {
    color: inherit;
    text-decoration: none;
}
svg {
    display: block;
    width: 28px;
    height: 28px;
    flex: none;
}
.sprite {
    position: absolute;
    width: 0;
    height: 0;
}
svg.w18 {
    width: 18px;
    height: 20px;
}
svg.w20 {
    width: 20px;
    height: 26px;
}
svg.w22 {
    width: 22px;
    height: 22px;
}
svg.w24 {
    width: 24px;
    height: 24px;
}
svg.w26 {
    width: 26px;
    height: 22px;
}
.spacer {
    flex: 1;
}

/* window chrome */
.titlebar {
    display: flex;
    align-items: center;
    height: 34px;
    padding-left: 4px;
    background: #eff4f9;
    color: #111;
    font-size: 17px;
}
.app-icon {
    display: flex;
    margin-right: 11px;
    border-radius: 4px;
    background: #0a0540;
    color: #9a97ff;
}
.app-icon svg {
    width: 20px;
    height: 20px;
}
.title {
    flex: 1;
    white-space: nowrap;
}
.win-buttons {
    display: flex;
    padding-right: 2px;
}
.win-buttons button {
    width: 70px;
    height: 34px;
}
.win-buttons svg {
    width: 16px;
    height: 16px;
}
.menubar {
    display: flex;
    gap: 21px;
    height: 30px;
    padding: 4px 12px 0;
    background: #fff;
    border-bottom: 2px solid #eee;
    color: #111;
    font-size: 17px;
    line-height: 22px;
}

/* top bar */
.topbar {
    display: grid;
    grid-template-columns: 1fr auto 1fr;
    height: 57px;
    background: #323232;
    border-bottom: 3px solid #1b1b1b;
}
.top-left,
.top-right {
    display: flex;
    align-items: center;
}
.top-left {
    padding-left: 24px;
}
.top-right {
    justify-content: flex-end;
    padding-right: 13px;
    font-size: 21px;
}
.pill {
    height: 39px;
    border: 2px solid #a8a8a8;
    border-radius: 20px;
    color: #d8d8d8;
    font-size: 19px;
    font-weight: 600;
    white-space: nowrap;
}
.create {
    width: 140px;
    gap: 12px;
}
.create svg {
    width: 18px;
    height: 12px;
}
.export {
    width: 170px;
}
.modes {
    display: flex;
    gap: 24px;
    font-size: 21px;
}
.modes a {
    padding: 17px 2px 0;
    color: #c8c8c8;
}
.modes .active {
    border-bottom: 3px solid #f0f0f0;
    color: #fff;
}
.project,
.edited {
    padding-top: 2px;
}
.edited {
    margin: 0 26px 0 19px;
}
.sep {
    width: 1px;
    height: 24px;
    background: #555;
}
.top-right .icon {
    width: 60px;
}
.top-right .sep + .icon {
    margin-left: 8px;
}
.top-right .icon + .sep {
    margin: 0 24px 0 7px;
}
.icon.small svg {
    width: 24px;
    height: 24px;
}

/* workspace */
.workspace {
    flex: 1;
    display: flex;
}
.sidebar {
    display: flex;
    flex-direction: column;
    align-items: center;
    background: #323232;
}
.sidebar.left {
    width: 86px;
    margin-right: 3px;
    padding: 32px 0 7px;
}
.sidebar.right {
    width: 84px;
    margin-left: 3px;
    padding: 36px 0 65px;
}
.side-label {
    margin-bottom: 20px;
    color: #7c7c7c;
    font-size: 19px;
}
.sidebar button {
    width: 60px;
    height: 60px;
}
.sidebar.left button:nth-of-type(n+6) svg {
    height: 26px;
}
.sidebar.right .side-label {
    margin-bottom: 12px;
}
.sidebar hr {
    width: 37px;
    margin: 26px 0 35px;
    border: none;
    border-top: 2px solid #d0d0d0;
}
.sidebar.right .edit {
    margin-bottom: 10px;
}
.t-glyph {
    font-family: "DejaVu Serif", serif;
    font-size: 28px;
    font-weight: 700;
    line-height: 28px;
}
.sidebar .t-glyph {
    font-weight: 400;
}
svg.t-plus {
    width: 15px;
    height: 15px;
    margin-left: -8px;
    margin-top: 14px;
    border-radius: 50%;
    background: #323232;
}
.fx {
    font-size: 30px;
    font-style: italic;
    line-height: 28px;
}
.fx.small {
    font-size: 24px;
}
svg.pen {
    width: 14px;
    height: 14px;
    margin: 14px 0 0 -6px;
}
.meter {
    display: flex;
    gap: 1px;
    width: 22px;
    height: 158px;
    padding: 1px;
    background: #0c0c0c;
}
.meter i {
    flex: 1;
    background: linear-gradient(#f54b4b 13px, #262626 13px, #262626 151px, #e8e040 151px, #e8e040 153px, #262626 153px);
}
.center {
    flex: 1;
    min-width: 0;
    display: flex;
    flex-direction: column;
    gap: 6px;
}
h2 {
    display: flex;
    align-items: center;
    gap: 22px;
    margin: 0;
    color: #e4e4e4;
    font-size: 18px;
    font-weight: 400;
}
h2 svg {
    width: 12px;
    height: 12px;
}

/* program monitor */
.monitor {
    padding: 0 19px 10px;
    background: #323232;
}
.monitor h2 {
    height: 44px;
}
.preview {
    width: 93px;
    height: 52px;
    margin: 18px auto 7px;
    background: #000;
}
.monitor-info {
    display: flex;
    align-items: center;
    height: 25px;
    padding: 0 27px 0 10px;
}
.timecode {
    font-size: 21px;
    font-weight: 600;
    color: #d0d0d0;
}
.timecode.blue {
    color: #4a94e6;
}
.timecode.big {
    font-size: 23px;
}
.select {
    position: relative;
    display: flex;
    align-items: center;
    width: 137px;
    height: 25px;
}
.select.fit {
    margin-left: 41px;
}
.select select {
    width: 100%;
    height: 100%;
    padding: 0 8px;
    border: 2px solid #6a6a6a;
    border-radius: 3px;
    background: #262626;
    color: #f0f0f0;
    font: inherit;
    font-size: 19px;
    line-height: 20px;
    appearance: none;
}
.select svg {
    position: absolute;
    right: 16px;
    width: 14px;
    height: 8px;
}
.fit-icon {
    width: 24px;
    height: 22px;
    margin: 0 16px;
}
.ticks {
    display: flex;
    align-items: flex-end;
    justify-content: space-between;
}
.tick {
    width: 1px;
    height: 8px;
    background: #5a5a5a;
}
.tick.major {
    height: 17px;
    background: #6a6a6a;
}
.monitor-ticks {
    position: relative;
    height: 20px;
    margin-top: 18px;
}
.playhead-flag {
    position: absolute;
    left: 0;
    top: 0;
    width: 9px;
    height: 18px;
    background: #cc2530;
    clip-path: polygon(0 0, 100% 0, 100% 70%, 30% 100%, 0 100%);
}
.scrub,
.thumb {
    display: flex;
    align-items: center;
    justify-content: space-between;
    background: #5c5c5c;
    border: 1px solid #4a4a4a;
}
.scrub {
    height: 17px;
    margin: 1px 0 10px 2px;
}
.knob {
    flex: none;
    width: 16px;
    height: 16px;
    border: 3px solid #cfcfcf;
    border-radius: 50%;
    background: #4a4a4a;
}
.transport {
    display: grid;
    grid-template-columns: 1fr auto 1fr;
    align-items: center;
    height: 37px;
    margin-right: -7px;
}
.transport-side,
.transport-main {
    display: flex;
    align-items: center;
}
.transport-side {
    padding-left: 18px;
}
.transport-side button {
    width: 54px;
}
.transport-side.end {
    justify-content: flex-end;
    padding: 0;
}
.transport-side svg {
    width: 26px;
    height: 26px;
}
.help {
    width: 25px;
    height: 25px;
    border: 2px solid #c8c8c8;
    border-radius: 50%;
    font-size: 16px;
    font-weight: 700;
    line-height: 20px;
}
.transport-main {
    margin-left: 212px;
}
.transport-main button {
    width: 52px;
}
.transport-main .render {
    width: 120px;
    height: 37px;
    margin-left: 14px;
    font-size: 18px;
    font-weight: 400;
}

/* tools + timeline */
.lower {
    flex: 1;
    display: flex;
    gap: 6px;
    padding-bottom: 3px;
}
.tools {
    width: 75px;
    padding: 23px 4px 0 0;
    background: #323232;
    display: flex;
    flex-direction: column;
    align-items: center;
    gap: 1px;
}
.tools button {
    width: 41px;
    height: 40px;
}
.tools .active {
    border: 1px solid #555;
    border-radius: 3px;
    background: #222;
    color: #4496f0;
}
.timeline {
    flex: 1;
    min-width: 0;
    display: flex;
    flex-direction: column;
    padding-bottom: 18px;
    border: 1px solid #4a86bd;
    background: #323232;
}
.timeline h2 {
    height: 40px;
    padding-left: 18px;
}
.ruler-row {
    display: flex;
    height: 91px;
    padding-right: 35px;
}
.ruler-tools {
    display: flex;
    align-items: center;
    width: 337px;
    padding: 17px 0 0 13px;
}
.ruler-tools button {
    width: 22px;
    margin-right: 29px;
}
.ruler-tools .timecode {
    margin-left: -3px;
}
.ruler {
    position: relative;
    flex: 1;
    min-width: 0;
    padding-right: 4px;
    overflow: hidden;
}
.ruler-labels {
    display: flex;
    margin: 26px 0 0 calc(-100% * 15 / 280 + 2px);
    color: #d0d0d0;
    font-size: 19px;
    line-height: 24px;
}
.ruler-labels span {
    flex: 0 0 calc((100% * 280 / 295) * 15 / 140);
    text-align: center;
}
.ruler .ticks {
    height: 17px;
    margin-top: -2px;
}
.ruler .playhead-flag {
    top: 48px;
}
.cursor-line {
    position: absolute;
    top: 3px;
    left: 37.2%;
    width: 1px;
    height: 62px;
    background: #777;
}
.workarea {
    width: 27.4%;
    height: 19px;
    margin: 4px 0 0 4px;
    border-right: 8px solid #cc2530;
    background: #6e6e6e;
    color: #333;
    font-size: 9px;
    line-height: 17px;
    text-align: center;
}
.render-line {
    display: block;
    width: 27%;
    height: 3px;
    margin-left: 13px;
    background: #eea51c;
}
.tracks-row {
    flex: 1;
    display: flex;
}
.tracks {
    position: relative;
    flex: 1;
    min-width: 0;
    display: flex;
    flex-direction: column;
    padding-bottom: 13px;
    background: #262626;
}
.track-space {
    flex: 1;
}
.audio-tracks {
    margin-top: 7px;
}
.playhead-line {
    position: absolute;
    top: -27px;
    bottom: 0;
    left: 336px;
    width: 3px;
    border-right: 1px solid #5a2226;
    background: #b83038;
}
.track {
    display: flex;
    border-bottom: 1px solid #262626;
    background: #323232;
    overflow: hidden;
}
.track.slim {
    height: 37px;
}
.track.tall {
    height: 74px;
}
.track.mid {
    height: 60px;
}
.track-head {
    width: 337px;
    padding: 7px 0 0 70px;
}
.track-main {
    display: flex;
    align-items: center;
    height: 24px;
}
.track-id {
    width: 35px;
    font-size: 16px;
    color: #c8c8c8;
}
.track-main svg.lock {
    width: 14px;
    height: 18px;
}
svg.eye {
    width: 20px;
    height: 12px;
    margin-left: 17px;
}
svg.spk {
    width: 24px;
    height: 20px;
    margin-left: 17px;
}
svg.mic {
    width: 16px;
    height: 22px;
    margin-left: 19px;
}
.track-name {
    margin-left: 15px;
    font-size: 19px;
}
.keys {
    display: flex;
    gap: 30px;
    padding-top: 19px;
}
svg.k {
    width: 10px;
    height: 14px;
}
svg.k.add {
    width: 12px;
}
.lane {
    flex: 1;
    padding-left: 13px;
}
.clip {
    position: relative;
    width: 27.1%;
    height: 100%;
    overflow: hidden;
    color: #fff;
    font-size: 16px;
}
.clip::before {
    content: "";
    position: absolute;
    z-index: 2;
    left: 0;
    top: 0;
    border-top: 6px solid #ddd;
    border-right: 6px solid transparent;
}
.film::after {
    content: "";
    position: absolute;
    right: 0;
    top: 0;
    border-top: 6px solid #ddd;
    border-left: 6px solid transparent;
}
.clip-title {
    position: relative;
    display: block;
    width: fit-content;
    padding: 0 9px 0 7px;
    line-height: 26px;
    white-space: nowrap;
}
.clip-line {
    position: absolute;
    left: 0;
    right: 0;
    top: 25px;
    height: 3px;
    border-bottom: 2px solid rgba(0, 0, 0, 0.5);
    background: #fff;
    z-index: 1;
}
.film {
    background: #35536f;
}
.frame {
    width: 130px;
    height: 48px;
    display: block;
    background: linear-gradient(rgba(8, 50, 28, 0.8) 9px, transparent 9px), radial-gradient(ellipse at 60% 40%, #1c6b40, #145030 70%, #0e3a22);
}
.frame.last {
    position: absolute;
    right: 0;
    top: 0;
    width: 131px;
    height: 100%;
    background: linear-gradient(transparent 29px, rgba(8, 50, 28, 0.8) 29px, rgba(8, 50, 28, 0.8) 36px, transparent 36px), radial-gradient(ellipse at 50% 50%, #1e7248, #1a6741 70%, #15502f);
}
.wave {
    background: #36704f;
    border-bottom: 1px solid #5bc08b;
}
.wave .clip-title {
    line-height: 26px;
}
.wave-shape {
    position: absolute;
    left: 0;
    top: 0;
    width: 100%;
    height: 100%;
}
.tall .wave .clip-line {
    top: 31px;
}
.flat {
    width: 25.6%;
}
.flat .clip-title {
    background: #36704f;
}
.intro {
    position: absolute;
    top: 0;
    right: 5px;
    width: 52px;
    height: 30px;
    background: #5bc08b;
}
.channel {
    position: absolute;
    left: 3px;
    bottom: 4px;
    width: 18px;
    padding-left: 4px;
    background: rgba(30, 70, 48, 0.7);
    color: #d8e4dc;
    font-weight: 400;
    line-height: 24px;
}
.vscrolls {
    display: flex;
    flex-direction: column;
    width: 35px;
    padding: 2px 0 0 2px;
}
.vscroll {
    width: 16px;
    background: #3c3c3c;
    border: 1px solid #4c4c4c;
}
.vscroll .thumb {
    flex-direction: column;
    height: 100%;
    margin: 0 -1px;
}
.vscroll.top {
    flex: 1;
    padding-top: 12px;
    border-radius: 8px 8px 0 0;
}
.vscroll.bottom {
    height: 387px;
    margin-top: 7px;
    padding-bottom: 13px;
    border-radius: 0 0 8px 8px;
}
.hscroll {
    height: 17px;
    margin: 1px 35px 0 0;
    border: 1px solid #4c4c4c;
    border-radius: 8px;
    background: #3c3c3c;
}
.hscroll .thumb {
    width: 84.6%;
    height: 15px;
    border-radius: 8px;
}

.statusbar {
    display: flex;
    justify-content: space-between;
    height: 30px;
    padding: 0 37px 0 24px;
    background: #262626;
    line-height: 30px;
}
.statusbar i {
    width: 2px;
    background: #4a4a4a;
}

/* taskbar */
.taskbar {
    display: flex;
    align-items: center;
    height: 72px;
    padding: 0 29px 1px 15px;
    border-top: 2px solid #b4bac4;
    background: linear-gradient(to right, #e2e8f3, #d5dff0 30%, #d6dcef 60%, #dadeed 75%, #e2e9f4 85%, #e0ebf3);
    color: #1a1a1a;
    font-size: 17px;
}
.task {
    position: relative;
    width: 66px;
    height: 60px;
    flex: none;
}
.task svg {
    width: 36px;
    height: 36px;
}
.task.run::after,
.task.current::after {
    content: "";
    position: absolute;
    bottom: 1px;
    left: 28px;
    width: 10px;
    height: 5px;
    border-radius: 3px;
    background: #7c828c;
}
.task.alert::before,
.task.current::before {
    content: "";
    position: absolute;
    z-index: -1;
    top: 0;
    bottom: 0;
    left: 3px;
    right: 3px;
    border-radius: 8px;
    background: #ebb0ac;
}
.task.stacked::before {
    box-shadow: inset -6px 0 0 #ebb0ac, inset -8px 0 0 #f6e0e2;
}
.task.alert,
.task.current {
    z-index: 0;
}
.task.alert::after {
    background: #c42b1c;
}
.task.current::before {
    top: 2px;
    bottom: 2px;
    left: 5px;
    right: 5px;
    background: #eef1fa;
    box-shadow: 0 1px 2px #b8bfd0;
}
.task.current::after {
    left: 21px;
    width: 24px;
    background: #0078d4;
}
.task svg.pre {
    width: 34px;
    height: 34px;
    border-radius: 6px;
    background: #07005c;
    color: #9a97ff;
}
.task svg.pre.pink {
    border-radius: 1px;
    background: #260a2c;
    color: #d87af0;
}
.avatar {
    position: absolute;
    left: 36px;
    top: 4px;
    width: 24px;
    height: 24px;
    border-radius: 50%;
    background: radial-gradient(circle at 40% 50%, #f4d0d0, #c86a78 60%, #9a4450);
}
.badge {
    position: absolute;
    left: 35px;
    top: 5px;
    width: 24px;
    height: 24px;
    border-radius: 50%;
    background: #0078d4;
    color: #fff;
    font-weight: 400;
    line-height: 24px;
}
.search {
    display: flex;
    align-items: center;
    width: 325px;
    height: 46px;
    margin: 0 6px 0 7px;
    padding: 0 8px 0 15px;
    border: 1px solid #cdd5e0;
    border-bottom-width: 2px;
    border-radius: 23px;
    background: #f6fafd;
}
svg.search-icon {
    width: 24px;
    height: 24px;
}
.search input {
    flex: 1;
    min-width: 0;
    padding: 0 0 0 14px;
    border: none;
    outline: none;
    background: none;
    font: inherit;
    font-size: 19px;
}
.search input::placeholder {
    color: #555;
    opacity: 1;
}
svg.castle {
    width: 60px;
    height: 38px;
}
.weather {
    display: flex;
    align-items: center;
    gap: 10px;
    margin: 0 126px 0 auto;
}
.weather svg {
    width: 38px;
    height: 38px;
}
.weather span,
.clock span {
    display: block;
}
.muted {
    color: #5c606a;
}
.tray {
    display: flex;
    align-items: center;
}
.tray-slot {
    width: 48px;
}
.tray-slot svg {
    width: 18px;
    height: 24px;
}
.lang {
    width: 72px;
    padding-right: 7px;
    text-align: center;
}
.tray-icon {
    width: 36px;
}
.clock {
    width: 112px;
    text-align: right;
}
```
